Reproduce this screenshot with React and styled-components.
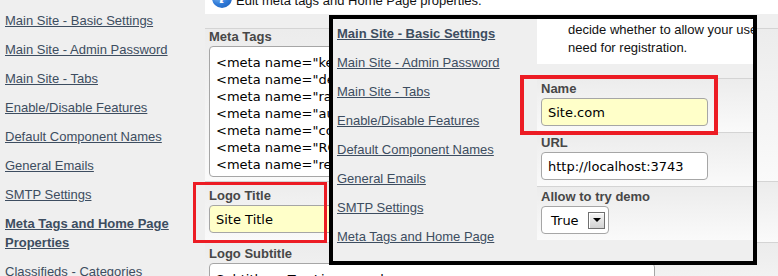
import React from 'react';
import styled, { createGlobalStyle, css } from 'styled-components';

const GlobalStyle = createGlobalStyle`
  html, body {
    margin: 0;
    padding: 0;
    background: #efefef;
  }
  body {
    font-family: 'Liberation Sans', Arial, sans-serif;
    font-size: 13px;
    overflow: hidden;
  }
`;

const Stage = styled.div`
  position: relative;
  width: 778px;
  height: 276px;
  overflow: hidden;
`;

const Screen = styled.div`
  display: flex;
  height: 100%;
  background: #efefef;
`;

const Sidebar = styled.ul`
  flex: 0 0 ${p => p.$width}px;
  box-sizing: border-box;
  margin: 0;
  padding: ${p => p.$top}px 15px 0 ${p => p.$left}px;
  list-style: none;
`;

const NavItem = styled.li`
  padding: 5px 0;
  line-height: 19px;
`;

const NavLink = styled.a`
  color: #3d4d60;
  text-decoration: underline;
  font-weight: ${p => (p.$active ? 'bold' : 'normal')};
  cursor: pointer;
`;

const Main = styled.div`
  flex: 1;
  min-width: 0;
`;

const InfoBox = styled.div`
  display: flex;
  align-items: flex-start;
  gap: 4px;
  box-sizing: border-box;
  height: ${p => p.$h}px;
  margin: ${p => p.$top}px 0 14px;
  padding: 2px 0 0 7px;
  background: #fff;
  overflow: hidden;
  line-height: 18px;
  color: #111;
  white-space: nowrap;
`;

const InfoIcon = styled.span`
  flex: 0 0 20px;
  height: 20px;
  margin-top: -4px;
  border-radius: 50%;
  background: radial-gradient(circle at 35% 30%, #9ccbf7, #2f7ad8 55%, #1b59b0);
  color: #fff;
  font: italic bold 14px/20px 'DejaVu Serif', serif;
  text-align: center;
`;

const FormRow = styled.div`
  border-top: 1px solid #d4d4d4;
  padding: ${p => p.$pad || '2px 0 6px'};
  padding-left: 4px;
  background: linear-gradient(to bottom, #ececec, #fafafa);
`;

const Label = styled.div`
  font-weight: bold;
  color: #474747;
  line-height: 16px;
  margin-bottom: 1px;
`;

const fieldCss = css`
  display: block;
  box-sizing: border-box;
  margin: 0;
  border: 1px solid #a6a6a6;
  border-radius: 4px;
  font-family: 'DejaVu Sans', Verdana, sans-serif;
  font-size: 13px;
  color: #000;
  outline: none;
`;

const Input = styled.input`
  ${fieldCss};
  width: ${p => p.$w}px;
  height: 28px;
  padding: 0 6px;
  background: ${p => (p.$yellow ? '#ffffc9' : '#fff')};
`;

const TextArea = styled.textarea`
  ${fieldCss};
  width: 446px;
  height: ${p => p.$h}px;
  padding: 7px 6px;
  line-height: 17px;
  background: #fff;
  resize: none;
  overflow: hidden;
  white-space: pre;
`;

const Select = styled.div`
  display: flex;
  align-items: center;
  justify-content: space-between;
  box-sizing: border-box;
  width: 68px;
  height: 28px;
  padding: 0 3px 0 9px;
  border: 1px solid #a6a6a6;
  border-radius: 4px;
  background: #fff;
  font-family: 'DejaVu Sans', Verdana, sans-serif;
  font-size: 13px;
`;

const SelectArrow = styled.span`
  display: flex;
  align-items: center;
  justify-content: center;
  box-sizing: border-box;
  width: 17px;
  height: 17px;
  border: 1px solid #707070;
  box-shadow: inset 1px 1px 0 #fff;
  background: linear-gradient(#f6f6f6, #d2d2d2);
  &::after {
    content: '';
    border-left: 4px solid transparent;
    border-right: 4px solid transparent;
    border-top: 4px solid #000;
  }
`;

const Overlay = styled.div`
  position: absolute;
  left: 329px;
  top: 15px;
  width: 428px;
  height: 250px;
  box-sizing: border-box;
  border: 4px solid #000;
  overflow: hidden;
  background: #efefef;
`;

const Highlight = styled.div`
  position: absolute;
  left: ${p => p.$x}px;
  top: ${p => p.$y}px;
  width: ${p => p.$w}px;
  height: ${p => p.$h}px;
  box-sizing: border-box;
  border: ${p => p.$b}px solid #ec1c24;
  pointer-events: none;
`;

const metaText = [
  '<meta name="keywords" content="classifieds, ads, jobs" />',
  '<meta name="description" content="Site description" />',
  '<meta name="rating" content="General" />',
  '<meta name="author" content="Site.com" />',
  '<meta name="copyright" content="Site.com" />',
  '<meta name="ROBOTS" content="INDEX, FOLLOW" />',
  '<meta name="revisit-after" content="7 days" />',
].join('\n');

const pageLinks = [
  'Main Site - Basic Settings',
  'Main Site - Admin Password',
  'Main Site - Tabs',
  'Enable/Disable Features',
  'Default Component Names',
  'General Emails',
  'SMTP Settings',
];

const Nav = ({ links, active, width, top, left }) => (
  <Sidebar $width={width} $top={top} $left={left}>
    {links.map(l => (
      <NavItem key={l}>
        <NavLink $active={l === active}>{l}</NavLink>
      </NavItem>
    ))}
  </Sidebar>
);

const App = () => (
  <Stage>
    <GlobalStyle />
    <Screen>
      <Nav
        links={[...pageLinks, 'Meta Tags and Home Page Properties', 'Classifieds - Categories']}
        active='Meta Tags and Home Page Properties'
        width={205}
        top={6}
        left={5}
      />
      <Main>
        <InfoBox $top={-10} $h={24}>
          <InfoIcon>i</InfoIcon>
          <span>Edit meta tags and Home Page properties.</span>
        </InfoBox>
        <FormRow $pad='0 0 4px'>
          <Label>Meta Tags</Label>
          <TextArea $h={131} readOnly wrap='off' value={metaText} />
        </FormRow>
        <FormRow $pad='6px 0 9px'>
          <Label>Logo Title</Label>
          <Input $w={167} $yellow readOnly value='Site Title' />
        </FormRow>
        <FormRow $pad='3px 0 0'>
          <Label>Logo Subtitle</Label>
          <TextArea $h={60} readOnly wrap='off' value='Subtitle or Tag Line goes here' />
        </FormRow>
      </Main>
    </Screen>
    <Highlight $x={193} $y={182} $w={134} $h={61} $b={3} />

    <Overlay>
      <Screen>
        <Nav
          links={[...pageLinks, 'Meta Tags and Home Page']}
          active='Main Site - Basic Settings'
          width={204}
          top={0}
          left={4}
        />
        <Main>
          <InfoBox $top={-18} $h={63}>
            <InfoIcon>i</InfoIcon>
            <div>
              <div>Here you can set the name and the address of your site. You can also</div>
              <div>decide whether to allow your users to try the demo without the</div>
              <div>need for registration.</div>
            </div>
          </InfoBox>
          <FormRow>
            <Label>Name</Label>
            <Input $w={167} $yellow readOnly value='Site.com' />
          </FormRow>
          <FormRow>
            <Label>URL</Label>
            <Input $w={167} readOnly value='http://localhost:3743' />
          </FormRow>
          <FormRow>
            <Label>Allow to try demo</Label>
            <Select>
              <span>True</span>
              <SelectArrow />
            </Select>
          </FormRow>
        </Main>
      </Screen>
      <Highlight $x={187} $y={56} $w={198} $h={60} $b={4} />
    </Overlay>
  </Stage>
);

export default App;
